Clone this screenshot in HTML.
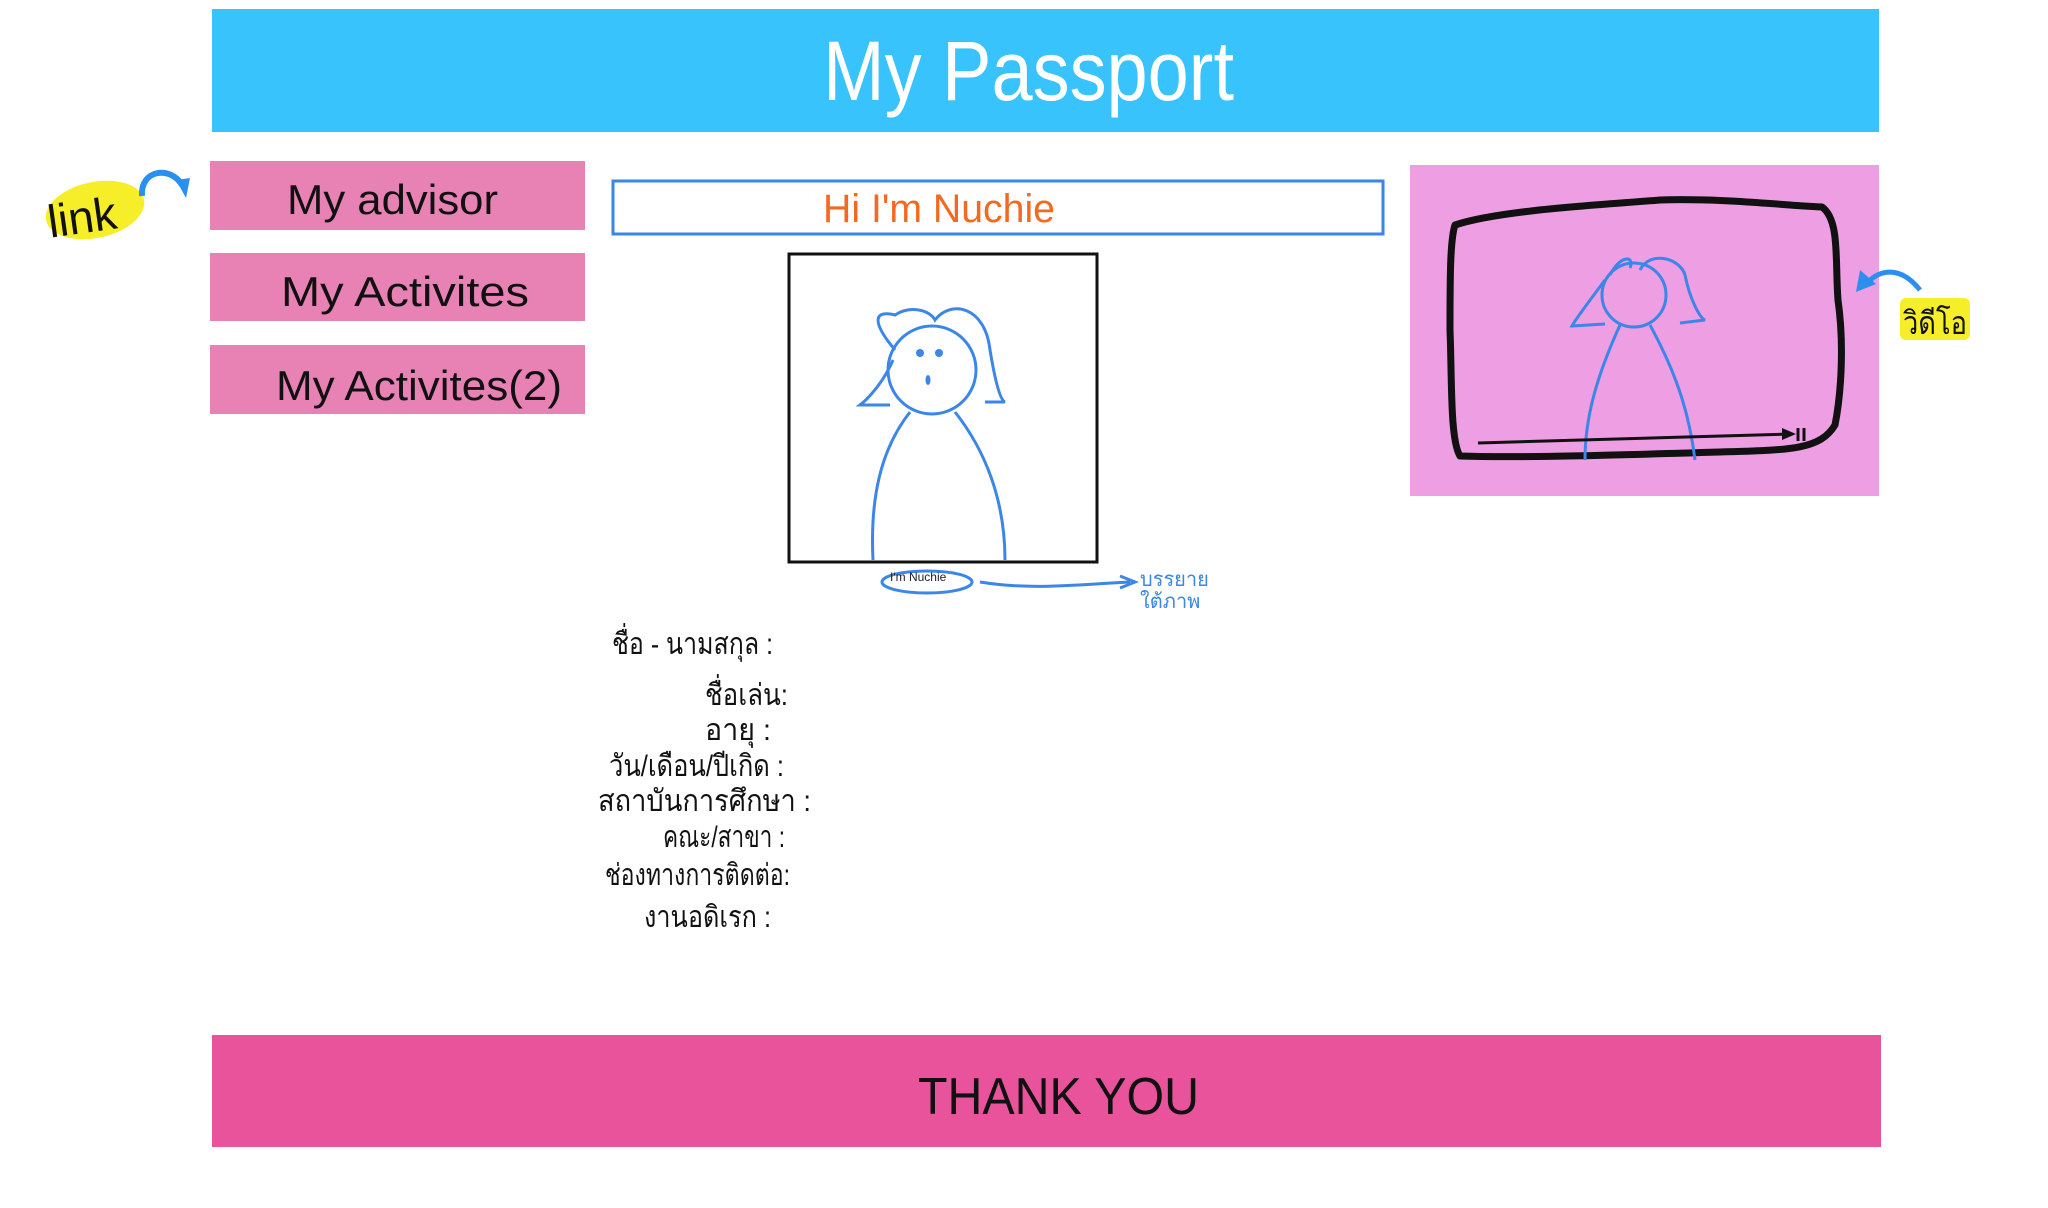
<!DOCTYPE html>
<html><head><meta charset="utf-8"><style>
html,body{margin:0;padding:0;background:#fff;width:2048px;height:1208px;overflow:hidden}
svg{display:block}
</style></head><body>
<svg width="2048" height="1208" viewBox="0 0 2048 1208" xmlns="http://www.w3.org/2000/svg">
<rect x="212" y="9" width="1667" height="123" fill="#38c3fc"/>
<text x="823" y="100" textLength="411" lengthAdjust="spacingAndGlyphs" font-family="Liberation Sans, sans-serif" font-size="84" fill="#fff">My Passport</text>

<ellipse cx="95" cy="210" rx="50" ry="28" fill="#f7ee2a" transform="rotate(-12 95 210)"/>
<text x="48" y="232" font-family="Liberation Sans, sans-serif" font-size="46" fill="#111" transform="rotate(-8 90 220)">link</text>
<path d="M142 196 C140 170 170 165 182 185" stroke="#2b8ff0" stroke-width="6" fill="none"/>
<path d="M176 180 L190 178 L186 198 Z" fill="#2b8ff0"/>

<rect x="210" y="161" width="375" height="69" fill="#e982b4"/>
<rect x="210" y="253" width="375" height="68" fill="#e982b4"/>
<rect x="210" y="345" width="375" height="69" fill="#e982b4"/>
<g font-family="Liberation Sans, sans-serif" font-size="42" fill="#111" lengthAdjust="spacingAndGlyphs">
<text x="287" y="214" textLength="211" lengthAdjust="spacingAndGlyphs">My advisor</text>
<text x="281" y="306" textLength="248" lengthAdjust="spacingAndGlyphs">My Activites</text>
<text x="276" y="400" textLength="286" lengthAdjust="spacingAndGlyphs">My Activites(2)</text>
</g>

<rect x="613" y="181" width="770" height="53" fill="#fff" stroke="#3b86e6" stroke-width="3"/>
<text x="823" y="222" textLength="232" lengthAdjust="spacingAndGlyphs" font-family="Liberation Sans, sans-serif" font-size="40" fill="#f26a22">Hi I'm Nuchie</text>

<rect x="789" y="254" width="308" height="308" fill="#fff" stroke="#111" stroke-width="3"/>
<g stroke="#3b86e6" stroke-width="3" fill="none">
<circle cx="932" cy="370" r="44"/>
<path d="M895 350 C870 320 875 310 895 315 C910 305 930 310 935 320 C950 300 985 305 990 350 C995 380 1000 400 1005 402 L985 402"/>
<path d="M893 360 C880 390 860 405 860 405 L890 405"/>
<path d="M910 412 C880 450 870 500 873 560"/>
<path d="M955 412 C985 450 1005 500 1005 560"/>
<ellipse cx="927" cy="582" rx="45" ry="11"/>
<path d="M980 582 C1030 590 1070 585 1130 582"/>
<path d="M1120 576 L1135 582 L1120 588"/>
</g>
<circle cx="920" cy="353" r="4" fill="#3b86e6"/><circle cx="939" cy="353" r="4" fill="#3b86e6"/>
<ellipse cx="928" cy="380" rx="2.5" ry="5" fill="#3b86e6"/>
<text x="890" y="581" font-family="Liberation Sans, sans-serif" font-size="12" fill="#222">I'm Nuchie</text>
<text x="1140" y="586" font-family="Liberation Sans, sans-serif" font-size="20" fill="#3b86e6">บรรยาย</text>
<text x="1140" y="608" font-family="Liberation Sans, sans-serif" font-size="20" fill="#3b86e6">ใต้ภาพ</text>

<rect x="1410" y="165" width="469" height="331" fill="#ee9ee3"/>
<path d="M1455 225 C1500 210 1600 205 1660 200 C1720 198 1780 205 1822 207 C1840 220 1835 260 1838 300 C1845 350 1840 400 1835 425 C1820 450 1790 450 1720 452 C1620 455 1520 458 1460 456 C1450 440 1452 380 1450 330 C1450 280 1450 240 1455 225 Z" stroke="#111" stroke-width="7" fill="none" stroke-linejoin="round"/>
<g stroke="#3b86e6" stroke-width="3" fill="none">
<circle cx="1634" cy="295" r="32"/>
<path d="M1610 275 C1620 255 1635 255 1630 268 M1640 270 C1650 250 1680 258 1685 275 C1690 300 1700 318 1705 320 L1680 323"/>
<path d="M1605 280 C1590 300 1575 320 1572 326 L1605 324"/>
<path d="M1620 325 C1595 380 1585 420 1585 460"/>
<path d="M1650 325 C1680 380 1690 420 1695 460"/>
</g>
<path d="M1478 443 L1790 434" stroke="#111" stroke-width="3"/>
<path d="M1782 428 L1796 434 L1782 440 Z" fill="#111"/>
<path d="M1798 428 V441 M1804 428 V441" stroke="#111" stroke-width="3"/>
<path d="M1920 290 C1900 265 1880 270 1868 282" stroke="#2b8ff0" stroke-width="5" fill="none"/>
<path d="M1856 292 L1860 270 L1876 284 Z" fill="#2b8ff0"/>
<rect x="1900" y="298" width="70" height="42" fill="#f7ee2a" rx="6"/>
<text x="1903" y="334" textLength="64" lengthAdjust="spacingAndGlyphs" font-family="Liberation Sans, sans-serif" font-size="32" fill="#111">วิดีโอ</text>

<g font-family="Liberation Sans, sans-serif" font-size="30" fill="#111">
<text x="612" y="654" textLength="161" lengthAdjust="spacingAndGlyphs">ชื่อ - นามสกุล :</text>
<text x="705" y="705" textLength="83" lengthAdjust="spacingAndGlyphs">ชื่อเล่น:</text>
<text x="705" y="740" textLength="66" lengthAdjust="spacingAndGlyphs">อายุ :</text>
<text x="609" y="776" textLength="175" lengthAdjust="spacingAndGlyphs">วัน/เดือน/ปีเกิด :</text>
<text x="598" y="811" textLength="213" lengthAdjust="spacingAndGlyphs">สถาบันการศึกษา :</text>
<text x="663" y="847" textLength="122" lengthAdjust="spacingAndGlyphs">คณะ/สาขา :</text>
<text x="605" y="885" textLength="185" lengthAdjust="spacingAndGlyphs">ช่องทางการติดต่อ:</text>
<text x="644" y="927" textLength="127" lengthAdjust="spacingAndGlyphs">งานอดิเรก :</text>
</g>

<rect x="212" y="1035" width="1669" height="112" fill="#e9539b"/>
<text x="918" y="1114" textLength="281" lengthAdjust="spacingAndGlyphs" font-family="Liberation Sans, sans-serif" font-size="52" fill="#111">THANK YOU</text>
</svg>
</body></html>
